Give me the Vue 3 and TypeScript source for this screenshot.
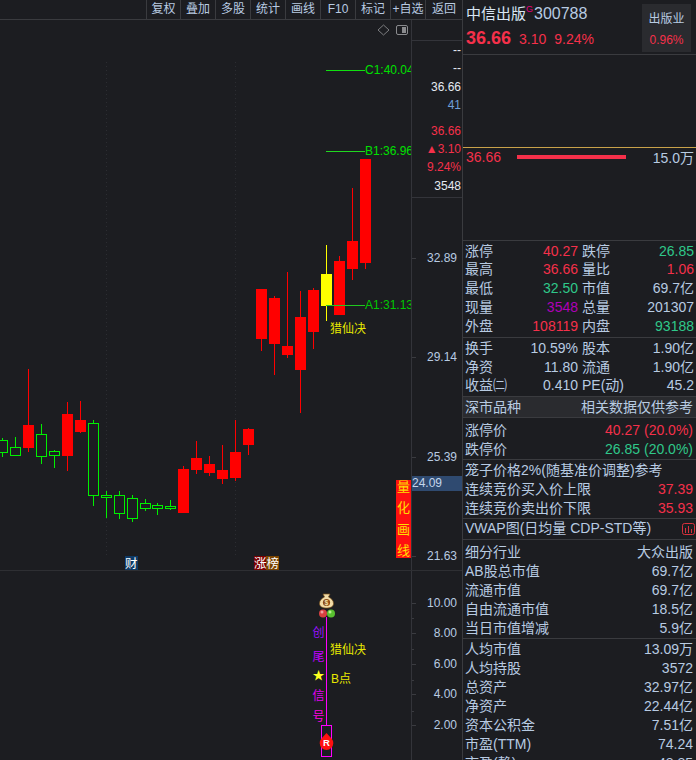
<script setup lang="ts">
interface Candle { x: number; hi: number; lo: number; top: number; bot: number; kind: 'g' | 'r' | 'y' }
const raw: [number, number, number, number, number, Candle['kind']][] = [
  [2.5, 438, 457, 440.5, 452.5, 'g'], [15.5, 437, 455, 447.5, 455.5, 'g'], [28.5, 369, 452, 425, 448, 'r'],
  [41.5, 424, 464, 434.5, 456.5, 'g'], [54.5, 450, 468, 451.5, 455.5, 'g'], [67.5, 402, 471, 414, 456, 'r'],
  [80.5, 401, 433, 420, 432, 'r'], [93.5, 420, 506, 423.5, 495.5, 'g'], [106.5, 491, 518, 495.5, 497.5, 'g'],
  [119.5, 491, 519, 495.5, 513.5, 'g'], [132.5, 495, 522, 498.5, 518.5, 'g'], [145.5, 499, 511, 503.5, 508.5, 'g'],
  [157.5, 503, 515, 505.5, 508.5, 'g'], [170.5, 500, 510, 506.5, 508.5, 'g'], [183.5, 466, 513, 469, 513, 'r'],
  [196.5, 441, 474, 458, 470, 'r'], [209.5, 456, 476, 464, 473, 'r'], [222.5, 445, 484, 470, 479, 'r'],
  [235.5, 420, 481, 452, 478, 'r'], [248.5, 428, 455, 429, 445, 'r'], [261.5, 289, 351, 289, 339, 'r'],
  [274.5, 296, 375, 298, 344, 'r'], [287.5, 272, 358, 346, 355, 'r'], [300.5, 291, 413, 317, 370, 'r'],
  [313.5, 288, 349, 290, 332, 'r'], [326.5, 245, 321, 274, 306, 'y'], [339.5, 256, 315, 261, 315, 'r'],
  [352.5, 188, 280, 241, 269, 'r'], [365.5, 159, 269, 159, 263, 'r'],
]
const candles: Candle[] = raw.map(([x, hi, lo, top, bot, kind]) => ({ x, hi, lo, top, bot, kind }))
const candleColor = (k: Candle['kind']) => (k === 'g' ? '#00f000' : k === 'y' ? '#ffff00' : '#ff0000')

const tools = ['复权', '叠加', '多股', '统计', '画线', 'F10', '标记', '+自选', '返回']
const stats = [
  { t: '--', c: 'white' }, { t: '--', c: 'white' }, { t: '36.66', c: 'white' }, { t: '41', c: 'blue' },
  { t: '36.66', c: 'red', gap: true }, { t: '▲3.10', c: 'red' }, { t: '9.24%', c: 'red' }, { t: '3548', c: 'white' },
]
const priceAxis = [
  { t: '32.89', y: 259 }, { t: '29.14', y: 358 }, { t: '25.39', y: 458 }, { t: '21.63', y: 557 },
]
const subAxis = [
  { t: '10.00', y: 603 }, { t: '8.00', y: 633 }, { t: '6.00', y: 664 }, { t: '4.00', y: 694 }, { t: '2.00', y: 725 },
]
const subMinor = [618, 649, 680, 711]
const signal = [
  { t: '创', y: 632, c: '#9a10ff' }, { t: '尾', y: 656, c: '#c000ff' }, { t: '信', y: 695, c: '#e000f0' }, { t: '号', y: 716, c: '#ff00e0' },
]

const quote = [
  ['涨停', '40.27', 'red', '跌停', '26.85', 'green'], ['最高', '36.66', 'red', '量比', '1.06', 'red'],
  ['最低', '32.50', 'green', '市值', '69.7亿', ''], ['现量', '3548', 'purple', '总量', '201307', ''],
  ['外盘', '108119', 'red', '内盘', '93188', 'green'],
]
const fin = [
  ['换手', '10.59%', '', '股本', '1.90亿', ''], ['净资', '11.80', '', '流通', '1.90亿', ''],
  ['收益㈡', '0.410', '', 'PE(动)', '45.2', ''],
]
const limits = [['涨停价', '40.27 (20.0%)', 'red'], ['跌停价', '26.85 (20.0%)', 'green']]
const cage = [['连续竞价买入价上限', '37.39', 'red'], ['连续竞价卖出价下限', '35.93', 'red']]
const industry = [
  ['细分行业', '大众出版'], ['AB股总市值', '69.7亿'], ['流通市值', '69.7亿'], ['自由流通市值', '18.5亿'], ['当日市值增减', '5.9亿'],
]
const holders = [
  ['人均市值', '13.09万'], ['人均持股', '3572'], ['总资产', '32.97亿'], ['净资产', '22.44亿'],
  ['资本公积金', '7.51亿'], ['市盈(TTM)', '74.24'], ['市盈(静)', '48.85'],
]
</script>

<template>
  <div class="app">
    <section class="left">
      <nav class="toolbar">
        <span v-for="t in tools" :key="t" class="tool">{{ t }}</span>
      </nav>
      <div class="main">
        <svg class="chart" width="411" height="550" viewBox="0 20 411 550">
          <line class="grid" x1="106.5" y1="62" x2="106.5" y2="556" />
          <line class="grid" x1="235.5" y1="62" x2="235.5" y2="556" />
          <path d="M383.500 25l5.500 5-5.500 5-5.500-5z" fill="none" stroke="#7c7d80" />
          <rect x="396.500" y="25.500" width="11" height="9" rx="1.500" fill="none" stroke="#8a8b8e" />
          <rect x="402" y="27" width="4" height="6" fill="#8a8b8e" />
          <g v-for="c in candles" :key="c.x">
            <template v-if="c.kind === 'g'">
              <line :x1="c.x" :x2="c.x" :y1="c.hi" :y2="c.top" :stroke="candleColor(c.kind)" />
              <line :x1="c.x" :x2="c.x" :y1="c.bot" :y2="c.lo" :stroke="candleColor(c.kind)" />
              <rect :x="c.x - 5" :y="c.top" width="10" :height="c.bot - c.top" fill="none" :stroke="candleColor(c.kind)" />
            </template>
            <template v-else>
              <line :x1="c.x" :x2="c.x" :y1="c.hi" :y2="c.lo" :stroke="candleColor(c.kind)" />
              <rect :x="c.x - 5.500" :y="c.top" width="11" :height="c.bot - c.top" :fill="candleColor(c.kind)" />
            </template>
          </g>
          <line x1="326" y1="70.500" x2="365" y2="70.500" stroke="#10e010" />
          <line x1="326" y1="151.500" x2="365" y2="151.500" stroke="#20d820" />
          <line x1="326" y1="305.500" x2="365" y2="305.500" stroke="#20c820" />
          <text class="lvl" x="365" y="74">C1:40.04</text>
          <text class="lvl" x="365" y="155">B1:36.96</text>
          <text class="lvl dim" x="365" y="309">A1:31.13</text>
          <text class="mark" x="330" y="333">猎仙决</text>
          <rect x="125" y="556" width="13" height="15" fill="#0e3a66" />
          <text class="badge" x="125" y="568">财</text>
          <rect x="254" y="556" width="12" height="14" fill="#7a0000" />
          <rect x="266" y="556" width="13" height="14" fill="#7a4400" />
          <text class="badge" x="254" y="568">涨榜</text>
        </svg>
        <div class="axis">
          <div class="axis-head"></div>
          <div class="axis-stats">
            <div v-for="(s, i) in stats" :key="i" class="stat" :class="[s.c, { gap: s.gap }]">{{ s.t }}</div>
          </div>
          <svg class="axis-svg" width="50" height="371" viewBox="412 199 50 371">
            <g v-for="p in priceAxis" :key="p.t">
              <line class="tick" x1="412" x2="416" :y1="p.y + 0.5" :y2="p.y + 0.5" />
              <text class="axis-text" x="457" :y="p.y + 4" text-anchor="end">{{ p.t }}</text>
            </g>
            <rect x="412" y="477" width="50" height="15" fill="#2f4a70" />
            <text class="axis-text bright" x="412" y="488">24.09</text>
          </svg>
        </div>
        <div class="quant"><span>量</span><span>化</span><span>画</span><span>线</span></div>
      </div>
      <div class="sub">
        <svg class="chart" width="411" height="189" viewBox="0 571 411 189">
          <line x1="326.500" y1="617" x2="326.500" y2="725" stroke="#ff00ff" />
          <rect x="321.500" y="725.500" width="10" height="31" fill="none" stroke="#ff00ff" />
          <path d="M323 594h7l-1.500 3c3 1.500 5 3.500 5 6.500 0 3-3 4.500-7 4.500s-7-1.500-7-4.500c0-3 2-5 5-6.500z" fill="#f2dca8" stroke="#7a5018" stroke-width="0.700" />
          <circle cx="326.500" cy="602.500" r="3.600" fill="#8a4a14" />
          <text class="bag" x="326.500" y="605" text-anchor="middle">$</text>
          <circle cx="323" cy="613.500" r="4" fill="#d84040" />
          <circle cx="331" cy="613.500" r="4" fill="#58c030" />
          <circle cx="322" cy="612" r="1.500" fill="#f0a0a0" />
          <circle cx="330" cy="612" r="1.500" fill="#b8f090" />
          <text v-for="s in signal" :key="s.t" class="sig" x="318.500" :y="s.y + 5" :fill="s.c" text-anchor="middle">{{ s.t }}</text>
          <text class="star" x="318.500" y="680" text-anchor="middle">★</text>
          <text class="mark" x="330" y="654">猎仙决</text>
          <text class="mark" x="331" y="683">B点</text>
          <path d="M326.500 733l5 5.500a6.800 6.800 0 1 1-10 0z" fill="#ff1010" />
          <text class="r" x="326.500" y="746" text-anchor="middle">R</text>
        </svg>
        <div class="sub-axis">
          <svg width="50" height="189" viewBox="412 571 50 189">
            <line v-for="m in subMinor" :key="m" class="tick" x1="412" x2="414" :y1="m + 0.5" :y2="m + 0.5" />
            <g v-for="p in subAxis" :key="p.t">
              <line class="tick" x1="412" x2="416" :y1="p.y + 0.5" :y2="p.y + 0.5" />
              <text class="axis-text" x="457" :y="p.y + 4" text-anchor="end">{{ p.t }}</text>
            </g>
          </svg>
        </div>
      </div>
    </section>

    <aside class="panel">
      <header class="head">
        <div class="head-main">
          <div class="title">
            <span class="name">中信出版</span><sup class="g">G</sup><span class="code">300788</span>
          </div>
          <div class="prices">
            <b class="last">36.66</b><span class="red">3.10</span><span class="red">9.24%</span>
          </div>
        </div>
        <div class="ind"><span>出版业</span><span class="red">0.96%</span></div>
      </header>
      <div class="ask"></div>
      <div class="bid">
        <div class="bid-row">
          <span class="red">36.66</span><i class="bar"></i><span class="vol">15.0万</span>
        </div>
      </div>
      <div class="block quote">
        <div v-for="r in quote" :key="r[0]" class="q-row">
          <span>{{ r[0] }}</span><span class="val" :class="r[2]">{{ r[1] }}</span>
          <span class="lab2">{{ r[3] }}</span><span class="val" :class="r[5]">{{ r[4] }}</span>
        </div>
      </div>
      <div class="block fin">
        <div v-for="r in fin" :key="r[0]" class="q-row">
          <span>{{ r[0] }}</span><span class="val" :class="r[2]">{{ r[1] }}</span>
          <span class="lab2">{{ r[3] }}</span><span class="val" :class="r[5]">{{ r[4] }}</span>
        </div>
      </div>
      <div class="band"><span>深市品种</span><span>相关数据仅供参考</span></div>
      <div class="block limits">
        <div v-for="r in limits" :key="r[0]" class="row"><span>{{ r[0] }}</span><span :class="r[2]">{{ r[1] }}</span></div>
      </div>
      <div class="block cage">
        <div class="row"><span>笼子价格2%(随基准价调整)参考</span></div>
        <div v-for="r in cage" :key="r[0]" class="row"><span>{{ r[0] }}</span><span :class="r[2]">{{ r[1] }}</span></div>
      </div>
      <div class="block vwap">
        <span class="vwap-text">VWAP图(日均量 CDP-STD等)</span>
        <svg width="13" height="12" viewBox="0 0 13 12">
          <rect x="0.500" y="0.500" width="12" height="11" rx="2" fill="none" stroke="#d8303c" />
          <path d="M3.500 5v5M6.500 3v7M9.500 6v4" stroke="#d8303c" fill="none" />
        </svg>
      </div>
      <div class="block industry">
        <div v-for="r in industry" :key="r[0]" class="row"><span>{{ r[0] }}</span><span>{{ r[1] }}</span></div>
      </div>
      <div class="block holders">
        <div v-for="r in holders" :key="r[0]" class="row"><span>{{ r[0] }}</span><span>{{ r[1] }}</span></div>
      </div>
    </aside>
  </div>
</template>

<style>
html, body { margin: 0; background: #1c1d21; }
</style>

<style scoped>
.app {
  width: 696px; height: 760px; display: flex; overflow: hidden; background: #1c1d21; color: #b8cbe2;
  font-family: "Liberation Sans", "Noto Sans CJK SC", sans-serif; font-size: 14px;
}
.left { width: 462px; flex: none; display: flex; flex-direction: column; }
.toolbar { height: 20px; box-sizing: border-box; flex: none; display: flex; justify-content: flex-end; border-bottom: 1px solid #3a3b3f; font-size: 12px; line-height: 18px; }
.tool { width: 35px; box-sizing: border-box; text-align: center; border-left: 1px solid #3a3b3f; white-space: nowrap; overflow: hidden; flex: none; }
.tool:first-child { width: 34px; }
.tool:last-child { width: 37px; }
.main { position: relative; height: 550px; flex: none; display: flex; border-bottom: 1px solid #2e2f33; box-sizing: content-box; }
.chart { flex: none; display: block; }
.grid { stroke: #2c2d32; stroke-dasharray: 1 3; }
.lvl { font-size: 12px; fill: #00e000; }
.lvl.dim { fill: #00c800; }
.mark { font-size: 12px; fill: #e8e800; }
.badge { font-size: 12.500px; fill: #ffffff; }
.axis { width: 51px; flex: none; border-left: 1px solid #33343a; display: flex; flex-direction: column; box-sizing: border-box; }
.axis-head { height: 20px; flex: none; border-bottom: 1px solid #33343a; }
.axis-stats { height: 157px; flex: none; border-bottom: 1px solid #33343a; box-sizing: border-box; padding: 0 1px 0 0; font-size: 12px; text-align: right; }
.stat { height: 18.400px; line-height: 18px; white-space: nowrap; }
.stat.gap { margin-top: 7px; }
.stat.white { color: #e4eaf2; }
.stat.blue { color: #6f9fd8; }
.axis-svg { display: block; flex: none; }
.axis-text { font-size: 12px; fill: #b8cbe2; }
.axis-text.bright { fill: #c4d6ec; }
.tick { stroke: #3a3b40; }
.quant {
  position: absolute; left: 396px; top: 460px; width: 15px; height: 78px; background: #ff1010; color: #ffe000;
  font-size: 13px; display: flex; flex-direction: column; justify-content: space-between; align-items: center; line-height: 14px;
}
.sub { flex: 1; display: flex; }
.sub-axis { width: 51px; flex: none; border-left: 1px solid #33343a; box-sizing: border-box; }
.sub-axis svg { display: block; }
.bag { font-size: 7px; font-weight: 700; fill: #f2dca8; }
.sig { font-size: 12px; }
.star { font-size: 12px; fill: #ffff20; }
.r { font-size: 9.500px; font-weight: 700; fill: #ffffff; }

.panel { width: 234px; flex: none; box-sizing: border-box; border-left: 1px solid #3a3b3f; overflow: hidden; }
.red { color: #f5304a; }
.green { color: #2fc88a; }
.purple { color: #b000b8; }
.head { height: 55px; box-sizing: border-box; border-bottom: 1px solid #3a3b3f; display: flex; justify-content: space-between; padding: 4px 5px 2px 3px; }
.head-main { display: flex; flex-direction: column; }
.title { display: flex; align-items: flex-start; height: 21px; line-height: 20px; white-space: nowrap; }
.name { font-size: 15px; color: #d8e6f4; }
.g { font-size: 9px; color: #e6007e; line-height: 10px; width: 8px; margin: 0; }
.code { font-size: 16px; }
.prices { display: flex; align-items: baseline; gap: 8px; margin-top: 1px; line-height: 24px; white-space: nowrap; }
.last { font-size: 18px; color: #f5304a; }
.ind { width: 49px; height: 48px; box-sizing: border-box; background: #2a2b2f; display: flex; flex-direction: column; align-items: center; justify-content: space-around; font-size: 12px; padding: 2px 0; }
.ask { height: 92px; border-bottom: 1px solid #c9a24a; }
.bid { height: 92px; border-bottom: 1px solid #3a3b3f; }
.bid-row { display: flex; align-items: center; height: 18px; padding: 0 2px 0 3px; }
.bid-row > span:first-child { width: 51px; flex: none; }
.bar { width: 109px; height: 4px; background: #f5304a; flex: none; }
.vol { flex: 1; text-align: right; }
.block { border-bottom: 1px solid #3a3b3f; }
.q-row { display: grid; grid-template-columns: 53px 60px 49px 1fr; padding: 0 2px; line-height: 18.750px; height: 18.750px; white-space: nowrap; }
.q-row .val { text-align: right; }
.lab2 { padding-left: 4px; }
.quote { height: 95.500px; padding-top: 0.500px; }
.fin { height: 57px; padding-top: 1px; }
.fin .q-row { height: 18.600px; line-height: 18.600px; }
.band { height: 20px; background: #2a2b2f; display: flex; justify-content: space-between; padding: 0 3px 0 2px; line-height: 20px; border-bottom: 1px solid #3a3b3f; }
.limits { height: 38px; padding-top: 3px; }
.cage { height: 57px; padding-top: 1px; }
.row { display: flex; justify-content: space-between; padding: 0 3px 0 2px; height: 19px; line-height: 19px; white-space: nowrap; }
.vwap { height: 20px; display: flex; justify-content: space-between; align-items: center; padding: 0 1px 0 2px; }
.vwap-text { line-height: 18px; margin-bottom: 2px; }
.industry { height: 95px; padding-top: 3px; }
.holders { padding-top: 1px; }
</style>
